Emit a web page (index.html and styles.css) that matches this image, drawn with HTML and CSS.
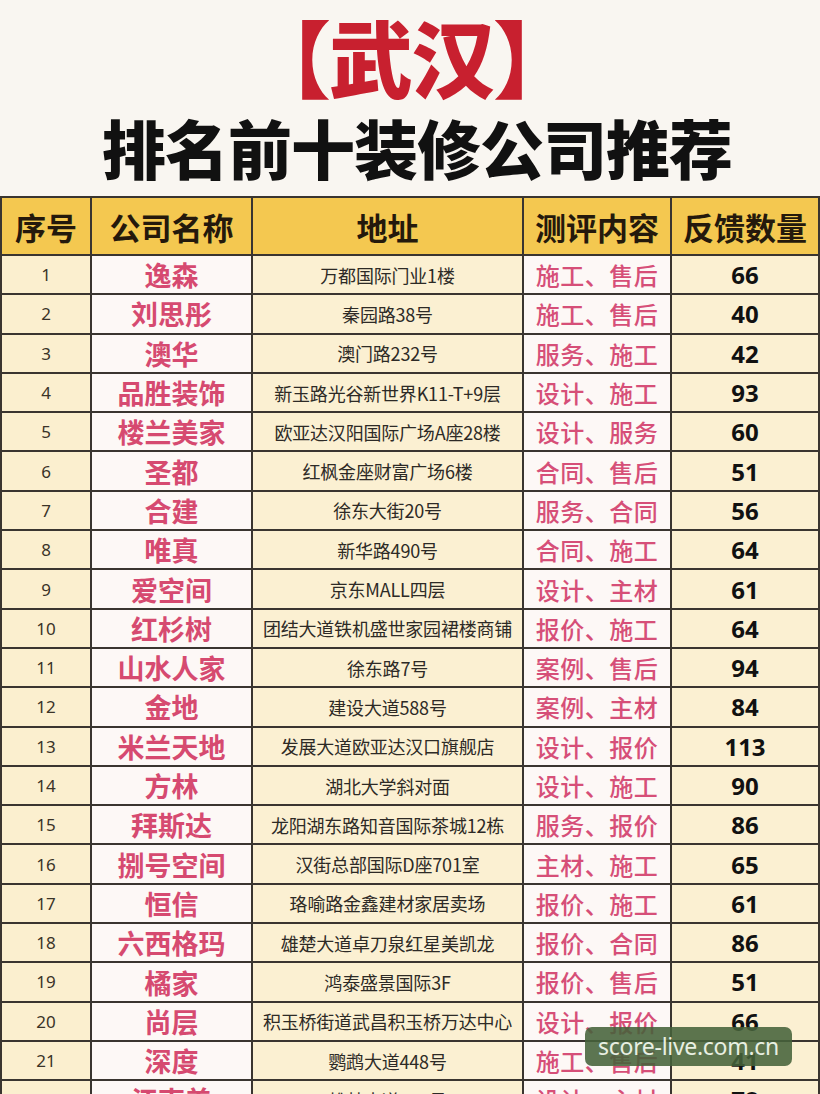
FILE: index.html
```html
<!DOCTYPE html>
<html lang="zh-CN">
<head>
<meta charset="utf-8">
<title>武汉排名前十装修公司推荐</title>
<link rel="stylesheet" href="styles.css">
</head>
<body>
<div class="page">
  <header class="hero">
    <div class="city">【武汉】</div>
    <h1 class="headline">排名前十装修公司推荐</h1>
  </header>
  <div class="table">
    <div class="th">序号</div><div class="th">公司名称</div><div class="th">地址</div><div class="th">测评内容</div><div class="th">反馈数量</div>

    <div class="c num">1</div><div class="c name">逸森</div><div class="c addr">万都国际门业1楼</div><div class="c tag">施工、售后</div><div class="c cnt">66</div>
    <div class="c num">2</div><div class="c name">刘思彤</div><div class="c addr">秦园路38号</div><div class="c tag">施工、售后</div><div class="c cnt">40</div>
    <div class="c num">3</div><div class="c name">澳华</div><div class="c addr">澳门路232号</div><div class="c tag">服务、施工</div><div class="c cnt">42</div>
    <div class="c num">4</div><div class="c name">品胜装饰</div><div class="c addr">新玉路光谷新世界K11-T+9层</div><div class="c tag">设计、施工</div><div class="c cnt">93</div>
    <div class="c num">5</div><div class="c name">楼兰美家</div><div class="c addr">欧亚达汉阳国际广场A座28楼</div><div class="c tag">设计、服务</div><div class="c cnt">60</div>
    <div class="c num">6</div><div class="c name">圣都</div><div class="c addr">红枫金座财富广场6楼</div><div class="c tag">合同、售后</div><div class="c cnt">51</div>
    <div class="c num">7</div><div class="c name">合建</div><div class="c addr">徐东大街20号</div><div class="c tag">服务、合同</div><div class="c cnt">56</div>
    <div class="c num">8</div><div class="c name">唯真</div><div class="c addr">新华路490号</div><div class="c tag">合同、施工</div><div class="c cnt">64</div>
    <div class="c num">9</div><div class="c name">爱空间</div><div class="c addr">京东MALL四层</div><div class="c tag">设计、主材</div><div class="c cnt">61</div>
    <div class="c num">10</div><div class="c name">红杉树</div><div class="c addr">团结大道铁机盛世家园裙楼商铺</div><div class="c tag">报价、施工</div><div class="c cnt">64</div>
    <div class="c num">11</div><div class="c name">山水人家</div><div class="c addr">徐东路7号</div><div class="c tag">案例、售后</div><div class="c cnt">94</div>
    <div class="c num">12</div><div class="c name">金地</div><div class="c addr">建设大道588号</div><div class="c tag">案例、主材</div><div class="c cnt">84</div>
    <div class="c num">13</div><div class="c name">米兰天地</div><div class="c addr">发展大道欧亚达汉口旗舰店</div><div class="c tag">设计、报价</div><div class="c cnt">113</div>
    <div class="c num">14</div><div class="c name">方林</div><div class="c addr">湖北大学斜对面</div><div class="c tag">设计、施工</div><div class="c cnt">90</div>
    <div class="c num">15</div><div class="c name">拜斯达</div><div class="c addr">龙阳湖东路知音国际茶城12栋</div><div class="c tag">服务、报价</div><div class="c cnt">86</div>
    <div class="c num">16</div><div class="c name">捌号空间</div><div class="c addr">汉街总部国际D座701室</div><div class="c tag">主材、施工</div><div class="c cnt">65</div>
    <div class="c num">17</div><div class="c name">恒信</div><div class="c addr">珞喻路金鑫建材家居卖场</div><div class="c tag">报价、施工</div><div class="c cnt">61</div>
    <div class="c num">18</div><div class="c name">六西格玛</div><div class="c addr">雄楚大道卓刀泉红星美凯龙</div><div class="c tag">报价、合同</div><div class="c cnt">86</div>
    <div class="c num">19</div><div class="c name">橘家</div><div class="c addr">鸿泰盛景国际3F</div><div class="c tag">报价、售后</div><div class="c cnt">51</div>
    <div class="c num">20</div><div class="c name">尚层</div><div class="c addr">积玉桥街道武昌积玉桥万达中心</div><div class="c tag">设计、报价</div><div class="c cnt">66</div>
    <div class="c num">21</div><div class="c name">深度</div><div class="c addr">鹦鹉大道448号</div><div class="c tag">施工、售后</div><div class="c cnt">41</div>
    <div class="c num">22</div><div class="c name">江南美</div><div class="c addr">雄楚大道112号</div><div class="c tag">设计、主材</div><div class="c cnt">78</div>
  </div>
  <div class="watermark">score-live.com.cn</div>
</div>
</body>
</html>
```

FILE: styles.css
```css
* { box-sizing: border-box; margin: 0; padding: 0; }

html, body {
  width: 820px;
  height: 1094px;
  overflow: hidden;
  background: #f9f6f1;
}

body {
  font-family: "Noto Sans CJK SC", "Noto Sans", sans-serif;
}

.page {
  position: relative;
  width: 820px;
  height: 1094px;
  overflow: hidden;
}

.hero {
  height: 196px;
  display: flex;
  flex-direction: column;
  align-items: center;
  padding-top: 2px;
  background: #f9f6f1;
}

.city {
  font-size: 84px;
  line-height: 108px;
  font-weight: 900;
  color: #c8202f;
  letter-spacing: -2px;
  margin-left: 2px;
}

.headline {
  font-size: 64px;
  line-height: 80px;
  font-weight: 900;
  color: #111;
  margin-left: 14px;
  margin-top: -4px;
  letter-spacing: -1px;
}

.table {
  display: grid;
  grid-template-columns: 88px 159px 269px 146px 146px;
  grid-template-rows: 56px repeat(22, 37.3px);
  gap: 2px;
  padding: 2px;
  background: #3a3530;
  width: 820px;
}

.th {
  background: #f4c850;
  display: flex;
  align-items: center;
  justify-content: center;
  font-size: 31px;
  font-weight: 700;
  color: #24190c;
  white-space: nowrap;
}

.c {
  display: flex;
  align-items: center;
  justify-content: center;
  white-space: nowrap;
  overflow: hidden;
}

.num {
  background: #fbefcf;
  font-family: "Noto Sans", "Noto Sans CJK SC", sans-serif;
  font-size: 17px;
  color: #3a3328;
}

.name {
  background: #fdf8f6;
  font-size: 27px;
  font-weight: 700;
  color: #d8487022;
  color: #d64a70;
}

.addr {
  background: #fbf0d2;
  font-size: 18px;
  color: #2d2a26;
  letter-spacing: -0.2px;
}

.tag {
  background: #fdf8f6;
  font-size: 24px;
  font-weight: 500;
  color: #d64f78;
  letter-spacing: 0.5px;
}

.cnt {
  background: #fbf0d2;
  font-family: "Noto Sans", "Noto Sans CJK SC", sans-serif;
  font-size: 24px;
  font-weight: 700;
  color: #111;
}

.watermark {
  position: absolute;
  left: 585px;
  top: 1027px;
  width: 207px;
  height: 39px;
  border-radius: 7px;
  background: rgba(70, 98, 58, 0.88);
  color: #e8efe2;
  font-family: "Noto Sans", sans-serif;
  font-size: 23px;
  line-height: 39px;
  text-align: center;
  letter-spacing: -0.3px;
}
```
